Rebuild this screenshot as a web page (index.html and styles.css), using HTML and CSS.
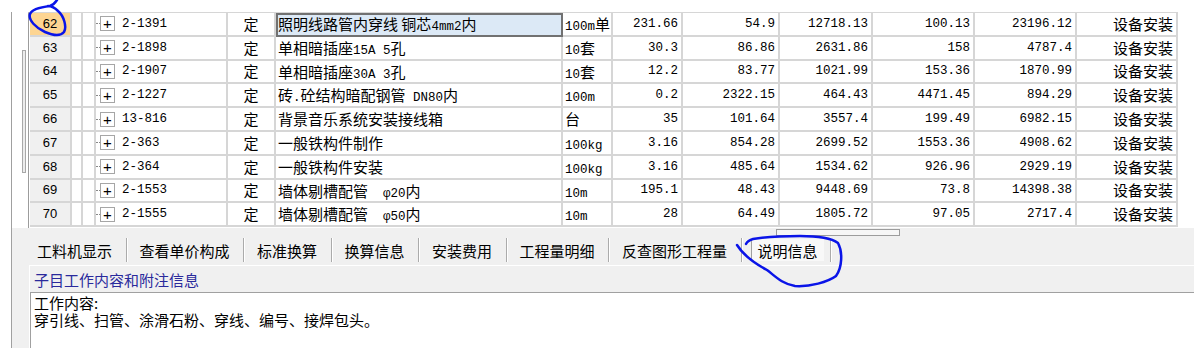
FILE: index.html
```html
<!DOCTYPE html>
<html lang="zh-CN">
<head>
    <meta charset="UTF-8">
    <title>说明信息</title>
    <link rel="stylesheet" href="styles.css">
</head>
<body>
    <div class="window">
        <div class="grid-area">
            <div class="vscroll"><div class="vthumb"></div></div>
            <div class="grid">
                <div class="row">
                    <div class="num cur">62</div><div></div><div></div>
                    <div class="code"><span class="tree"></span><span class="plus">+</span>2-1391</div>
                    <div class="ding">定</div>
                    <div class="name sel">照明线路管内穿线 铜芯<span class="lat">4mm2</span>内</div>
                    <div class="unit"><span class="lat">100m</span>单</div>
                    <div class="n">231.66</div><div class="n">54.9</div><div class="n">12718.13</div>
                    <div class="n">100.13</div><div class="n">23196.12</div>
                    <div class="type">设备安装</div>
                </div>
                <div class="row">
                    <div class="num">63</div><div></div><div></div>
                    <div class="code"><span class="tree"></span><span class="plus">+</span>2-1898</div>
                    <div class="ding">定</div>
                    <div class="name">单相暗插座<span class="lat">15A 5</span>孔</div>
                    <div class="unit"><span class="lat">10</span>套</div>
                    <div class="n">30.3</div><div class="n">86.86</div><div class="n">2631.86</div>
                    <div class="n">158</div><div class="n">4787.4</div>
                    <div class="type">设备安装</div>
                </div>
                <div class="row">
                    <div class="num">64</div><div></div><div></div>
                    <div class="code"><span class="tree"></span><span class="plus">+</span>2-1907</div>
                    <div class="ding">定</div>
                    <div class="name">单相暗插座<span class="lat">30A 3</span>孔</div>
                    <div class="unit"><span class="lat">10</span>套</div>
                    <div class="n">12.2</div><div class="n">83.77</div><div class="n">1021.99</div>
                    <div class="n">153.36</div><div class="n">1870.99</div>
                    <div class="type">设备安装</div>
                </div>
                <div class="row">
                    <div class="num">65</div><div></div><div></div>
                    <div class="code"><span class="tree"></span><span class="plus">+</span>2-1227</div>
                    <div class="ding">定</div>
                    <div class="name">砖<span class="lat">.</span>砼结构暗配钢管<span class="lat"> DN80</span>内</div>
                    <div class="unit"><span class="lat">100m</span></div>
                    <div class="n">0.2</div><div class="n">2322.15</div><div class="n">464.43</div>
                    <div class="n">4471.45</div><div class="n">894.29</div>
                    <div class="type">设备安装</div>
                </div>
                <div class="row">
                    <div class="num">66</div><div></div><div></div>
                    <div class="code"><span class="tree"></span><span class="plus">+</span>13-816</div>
                    <div class="ding">定</div>
                    <div class="name">背景音乐系统安装接线箱</div>
                    <div class="unit">台</div>
                    <div class="n">35</div><div class="n">101.64</div><div class="n">3557.4</div>
                    <div class="n">199.49</div><div class="n">6982.15</div>
                    <div class="type">设备安装</div>
                </div>
                <div class="row">
                    <div class="num">67</div><div></div><div></div>
                    <div class="code"><span class="tree"></span><span class="plus">+</span>2-363</div>
                    <div class="ding">定</div>
                    <div class="name">一般铁构件制作</div>
                    <div class="unit"><span class="lat">100kg</span></div>
                    <div class="n">3.16</div><div class="n">854.28</div><div class="n">2699.52</div>
                    <div class="n">1553.36</div><div class="n">4908.62</div>
                    <div class="type">设备安装</div>
                </div>
                <div class="row">
                    <div class="num">68</div><div></div><div></div>
                    <div class="code"><span class="tree"></span><span class="plus">+</span>2-364</div>
                    <div class="ding">定</div>
                    <div class="name">一般铁构件安装</div>
                    <div class="unit"><span class="lat">100kg</span></div>
                    <div class="n">3.16</div><div class="n">485.64</div><div class="n">1534.62</div>
                    <div class="n">926.96</div><div class="n">2929.19</div>
                    <div class="type">设备安装</div>
                </div>
                <div class="row">
                    <div class="num">69</div><div></div><div></div>
                    <div class="code"><span class="tree"></span><span class="plus">+</span>2-1553</div>
                    <div class="ding">定</div>
                    <div class="name">墙体剔槽配管<span class="lat">  φ20</span>内</div>
                    <div class="unit"><span class="lat">10m</span></div>
                    <div class="n">195.1</div><div class="n">48.43</div><div class="n">9448.69</div>
                    <div class="n">73.8</div><div class="n">14398.38</div>
                    <div class="type">设备安装</div>
                </div>
                <div class="row">
                    <div class="num">70</div><div></div><div></div>
                    <div class="code"><span class="tree"></span><span class="plus">+</span>2-1555</div>
                    <div class="ding">定</div>
                    <div class="name">墙体剔槽配管<span class="lat">  φ50</span>内</div>
                    <div class="unit"><span class="lat">10m</span></div>
                    <div class="n">28</div><div class="n">64.49</div><div class="n">1805.72</div>
                    <div class="n">97.05</div><div class="n">2717.4</div>
                    <div class="type">设备安装</div>
                </div>
            </div>
        </div>

        <div class="lower">
            <div class="hscroll"><div class="hthumb"></div></div>
            <div class="tabs">
                <div class="tab">工料机显示</div>
                <div class="tab">查看单价构成</div>
                <div class="tab">标准换算</div>
                <div class="tab">换算信息</div>
                <div class="tab">安装费用</div>
                <div class="tab">工程量明细</div>
                <div class="tab">反查图形工程量</div>
                <div class="tab on"><span>说明信息</span></div>
            </div>
            <div class="info">
                <div class="info-title">子目工作内容和附注信息</div>
                <div class="info-text">
                    <p>工作内容:</p>
                    <p>穿引线、扫管、涂滑石粉、穿线、编号、接焊包头。</p>
                </div>
            </div>
        </div>
    </div>

    <!-- pen marks drawn on the screenshot -->
    <svg class="marks" width="1194" height="348" viewBox="0 0 1194 348">
        <path d="M57,0 C55,3 53,5 50,6 C42,7 32,9 30,14 C28,20 36,28 45,32 C52,35 60,37 64,32 C67,27 64,16 58,11 C55,8 52,6 48,6"/>
        <path d="M737,245 C742,253 752,262 767,270 C775,276 782,284 795,286 C810,287 828,282 836,276 C842,268 843,252 838,243 C830,237 815,236 800,236 C785,236 765,237 753,239 C749,240 747,242 746,244"/>
    </svg>
</body>
</html>
```

FILE: styles.css
```css
body {
    margin: 0;
    width: 1194px;
    height: 348px;
    overflow: hidden;
    position: relative;
    background: #fff;
    color: #000;
    font-family: "Noto Sans CJK SC", sans-serif;
    font-size: 15px;
}

.window {
    margin: 12px 0 0 11px;
    height: 336px;
    border-left: 1px solid #a0a0a0;
    display: flex;
    flex-direction: column;
}

/* grid */
.grid-area {
    display: flex;
    height: 216px;
}

.vscroll {
    width: 16px;
}

.vthumb {
    margin: 38px 0 0 10px;
    width: 2px;
    height: 121px;
    border: 1px solid #a8a8a8;
    background: #ececec;
}

.grid {
    width: 1148px;
    border-left: 1px solid #9c9c9c;
    border-top: 1px solid #d6d6d6;
    padding-left: 1px;
}

.row {
    display: grid;
    grid-template-columns: 42px 11px 13px 132px 48px 287px 50px 70px 97px 93px 102px 102px 101px;
    height: 23.8px;
}

.row > div {
    display: flex;
    align-items: center;
    overflow: hidden;
    white-space: nowrap;
    border-right: 2px solid #d6d6d6;
    border-bottom: 2px solid #d6d6d6;
    line-height: 18px;
}

.num {
    justify-content: center;
    background: #f0f0f0;
    font-family: "Liberation Sans", sans-serif;
    font-size: 13px;
}

.num.cur {
    background: #fdd592;
}

.code {
    font-family: "Liberation Mono", monospace;
    font-size: 12.5px;
}

.tree {
    width: 4px;
    border-top: 1px dotted #888;
}

.plus {
    width: 13px;
    height: 13px;
    margin-right: 7px;
    border: 1px solid #a6a6a6;
    display: flex;
    align-items: center;
    justify-content: center;
    font-family: "Liberation Sans", sans-serif;
    font-size: 15px;
    line-height: 13px;
}

.ding {
    justify-content: center;
}

.row > .name,
.row > .unit {
    display: block;
    padding-left: 2px;
    line-height: 21.8px;
    white-space: pre;
}

.name.sel {
    background: #dce9f6;
    outline: 2px solid #717171;
    outline-offset: -2px;
}

.lat {
    font-family: "Liberation Mono", monospace;
    font-size: 12.5px;
}

.n {
    justify-content: flex-end;
    padding-right: 3px;
    font-family: "Liberation Mono", monospace;
    font-size: 12.5px;
}

.type {
    justify-content: flex-end;
    padding-right: 3px;
}

/* lower panel */
.lower {
    flex: 1;
    background: #f0f0f0;
    display: flex;
    flex-direction: column;
}

.hscroll {
    height: 10px;
}

.hthumb {
    margin: 1px 0 0 764px;
    width: 122px;
    height: 5px;
    border: 1px solid #9c9c9c;
    background: #f6f6f6;
}

.tabs {
    display: flex;
    height: 24px;
    padding-left: 12px;
}

.tab {
    display: flex;
    align-items: center;
    padding: 0 13.5px 0 13px;
    border-right: 1px solid #ababab;
    box-shadow: 1px 0 0 #fff;
}

.tab.on {
    padding: 0 6px 0 9px;
}

.tab.on span {
    height: 22px;
    display: flex;
    align-items: center;
    padding: 0 6px;
    background: #f8f8f8;
    border-left: 1px solid #a0a0a0;
}

.info {
    flex: 1;
    margin: 3px 0 0 17px;
    border-top: 1px solid #fff;
    border-left: 1px solid #fff;
    display: flex;
    flex-direction: column;
}

.info-title {
    height: 26px;
    padding-left: 4px;
    display: flex;
    align-items: center;
    color: #2a2a9c;
}

.info-text {
    flex: 1;
    background: #fff;
    border-top: 1px solid #a0a0a0;
    border-left: 1px solid #a0a0a0;
    padding: 1px 0 0 3px;
}

.info-text p {
    margin: 0;
    height: 17px;
    line-height: 17px;
}

.marks {
    position: absolute;
    top: 0;
    left: 0;
    pointer-events: none;
}

.marks path {
    fill: none;
    stroke: #0a14e8;
    stroke-width: 2.5;
    stroke-linecap: round;
}
```
